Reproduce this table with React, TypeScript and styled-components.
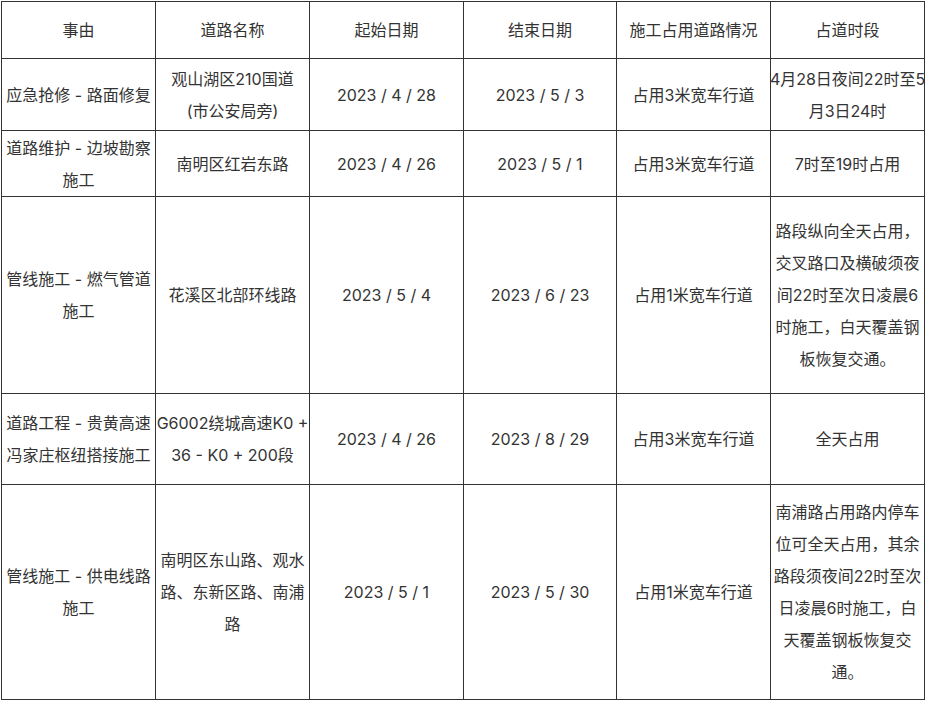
import React from "react";
import styled, { createGlobalStyle } from "styled-components";

const Global = createGlobalStyle`
  html, body { margin: 0; padding: 0; background: #fff; }
  body {
    font-family: Inter, "Noto Sans CJK SC", "Noto Sans", sans-serif;
    color: #333;
  }
`;

const Page = styled.div`
  padding: 1px 0 0 1px;
`;

const Grid = styled.div<{ $rows: string }>`
  display: grid;
  grid-template-columns: 153px 153px 153px 152px 153px 153px;
  grid-template-rows: ${(p) => p.$rows};
  gap: 1px;
  padding: 1px;
  background: #333;
  width: max-content;
`;

const Cell = styled.div`
  background: #fff;
  display: flex;
  align-items: center;
  justify-content: center;
  text-align: center;
  font-family: Inter, "Noto Sans CJK SC", sans-serif;
  font-size: 16px;
  line-height: 32px;
  color: #333;
  white-space: nowrap;
  padding: 0;
  overflow: hidden;
`;

const Lines = styled.div`
  display: flex;
  flex-direction: column;
  align-items: center;
`;

type Row = { h: number; cells: string[][] };

const header = ["事由", "道路名称", "起始日期", "结束日期", "施工占用道路情况", "占道时段"];

const rows: Row[] = [
  {
    h: 71,
    cells: [
      ["应急抢修 - 路面修复"],
      ["观山湖区210国道", "(市公安局旁)"],
      ["2023 / 4 / 28"],
      ["2023 / 5 / 3"],
      ["占用3米宽车行道"],
      ["4月28日夜间22时至5", "月3日24时"],
    ],
  },
  {
    h: 65,
    cells: [
      ["道路维护 - 边坡勘察", "施工"],
      ["南明区红岩东路"],
      ["2023 / 4 / 26"],
      ["2023 / 5 / 1"],
      ["占用3米宽车行道"],
      ["7时至19时占用"],
    ],
  },
  {
    h: 196,
    cells: [
      ["管线施工 - 燃气管道", "施工"],
      ["花溪区北部环线路"],
      ["2023 / 5 / 4"],
      ["2023 / 6 / 23"],
      ["占用1米宽车行道"],
      ["路段纵向全天占用，", "交叉路口及横破须夜", "间22时至次日凌晨6", "时施工，白天覆盖钢", "板恢复交通。"],
    ],
  },
  {
    h: 90,
    cells: [
      ["道路工程 - 贵黄高速", "冯家庄枢纽搭接施工"],
      ["G6002绕城高速K0 +", "36 - K0 + 200段"],
      ["2023 / 4 / 26"],
      ["2023 / 8 / 29"],
      ["占用3米宽车行道"],
      ["全天占用"],
    ],
  },
  {
    h: 214,
    cells: [
      ["管线施工 - 供电线路", "施工"],
      ["南明区东山路、观水", "路、东新区路、南浦", "路"],
      ["2023 / 5 / 1"],
      ["2023 / 5 / 30"],
      ["占用1米宽车行道"],
      ["南浦路占用路内停车", "位可全天占用，其余", "路段须夜间22时至次", "日凌晨6时施工，白", "天覆盖钢板恢复交", "通。"],
    ],
  },
];

export default function App() {
  const template = ["56px", ...rows.map((r) => `${r.h}px`)].join(" ");
  return (
    <Page>
      <Global />
      <Grid $rows={template} role="table">
        {header.map((h) => (
          <Cell key={h} role="columnheader">
            {h}
          </Cell>
        ))}
        {rows.map((r, ri) =>
          r.cells.map((lines, ci) => (
            <Cell key={`${ri}-${ci}`} role="cell">
              <Lines>
                {lines.map((l, li) => (
                  <span key={li}>{l}</span>
                ))}
              </Lines>
            </Cell>
          ))
        )}
      </Grid>
    </Page>
  );
}
